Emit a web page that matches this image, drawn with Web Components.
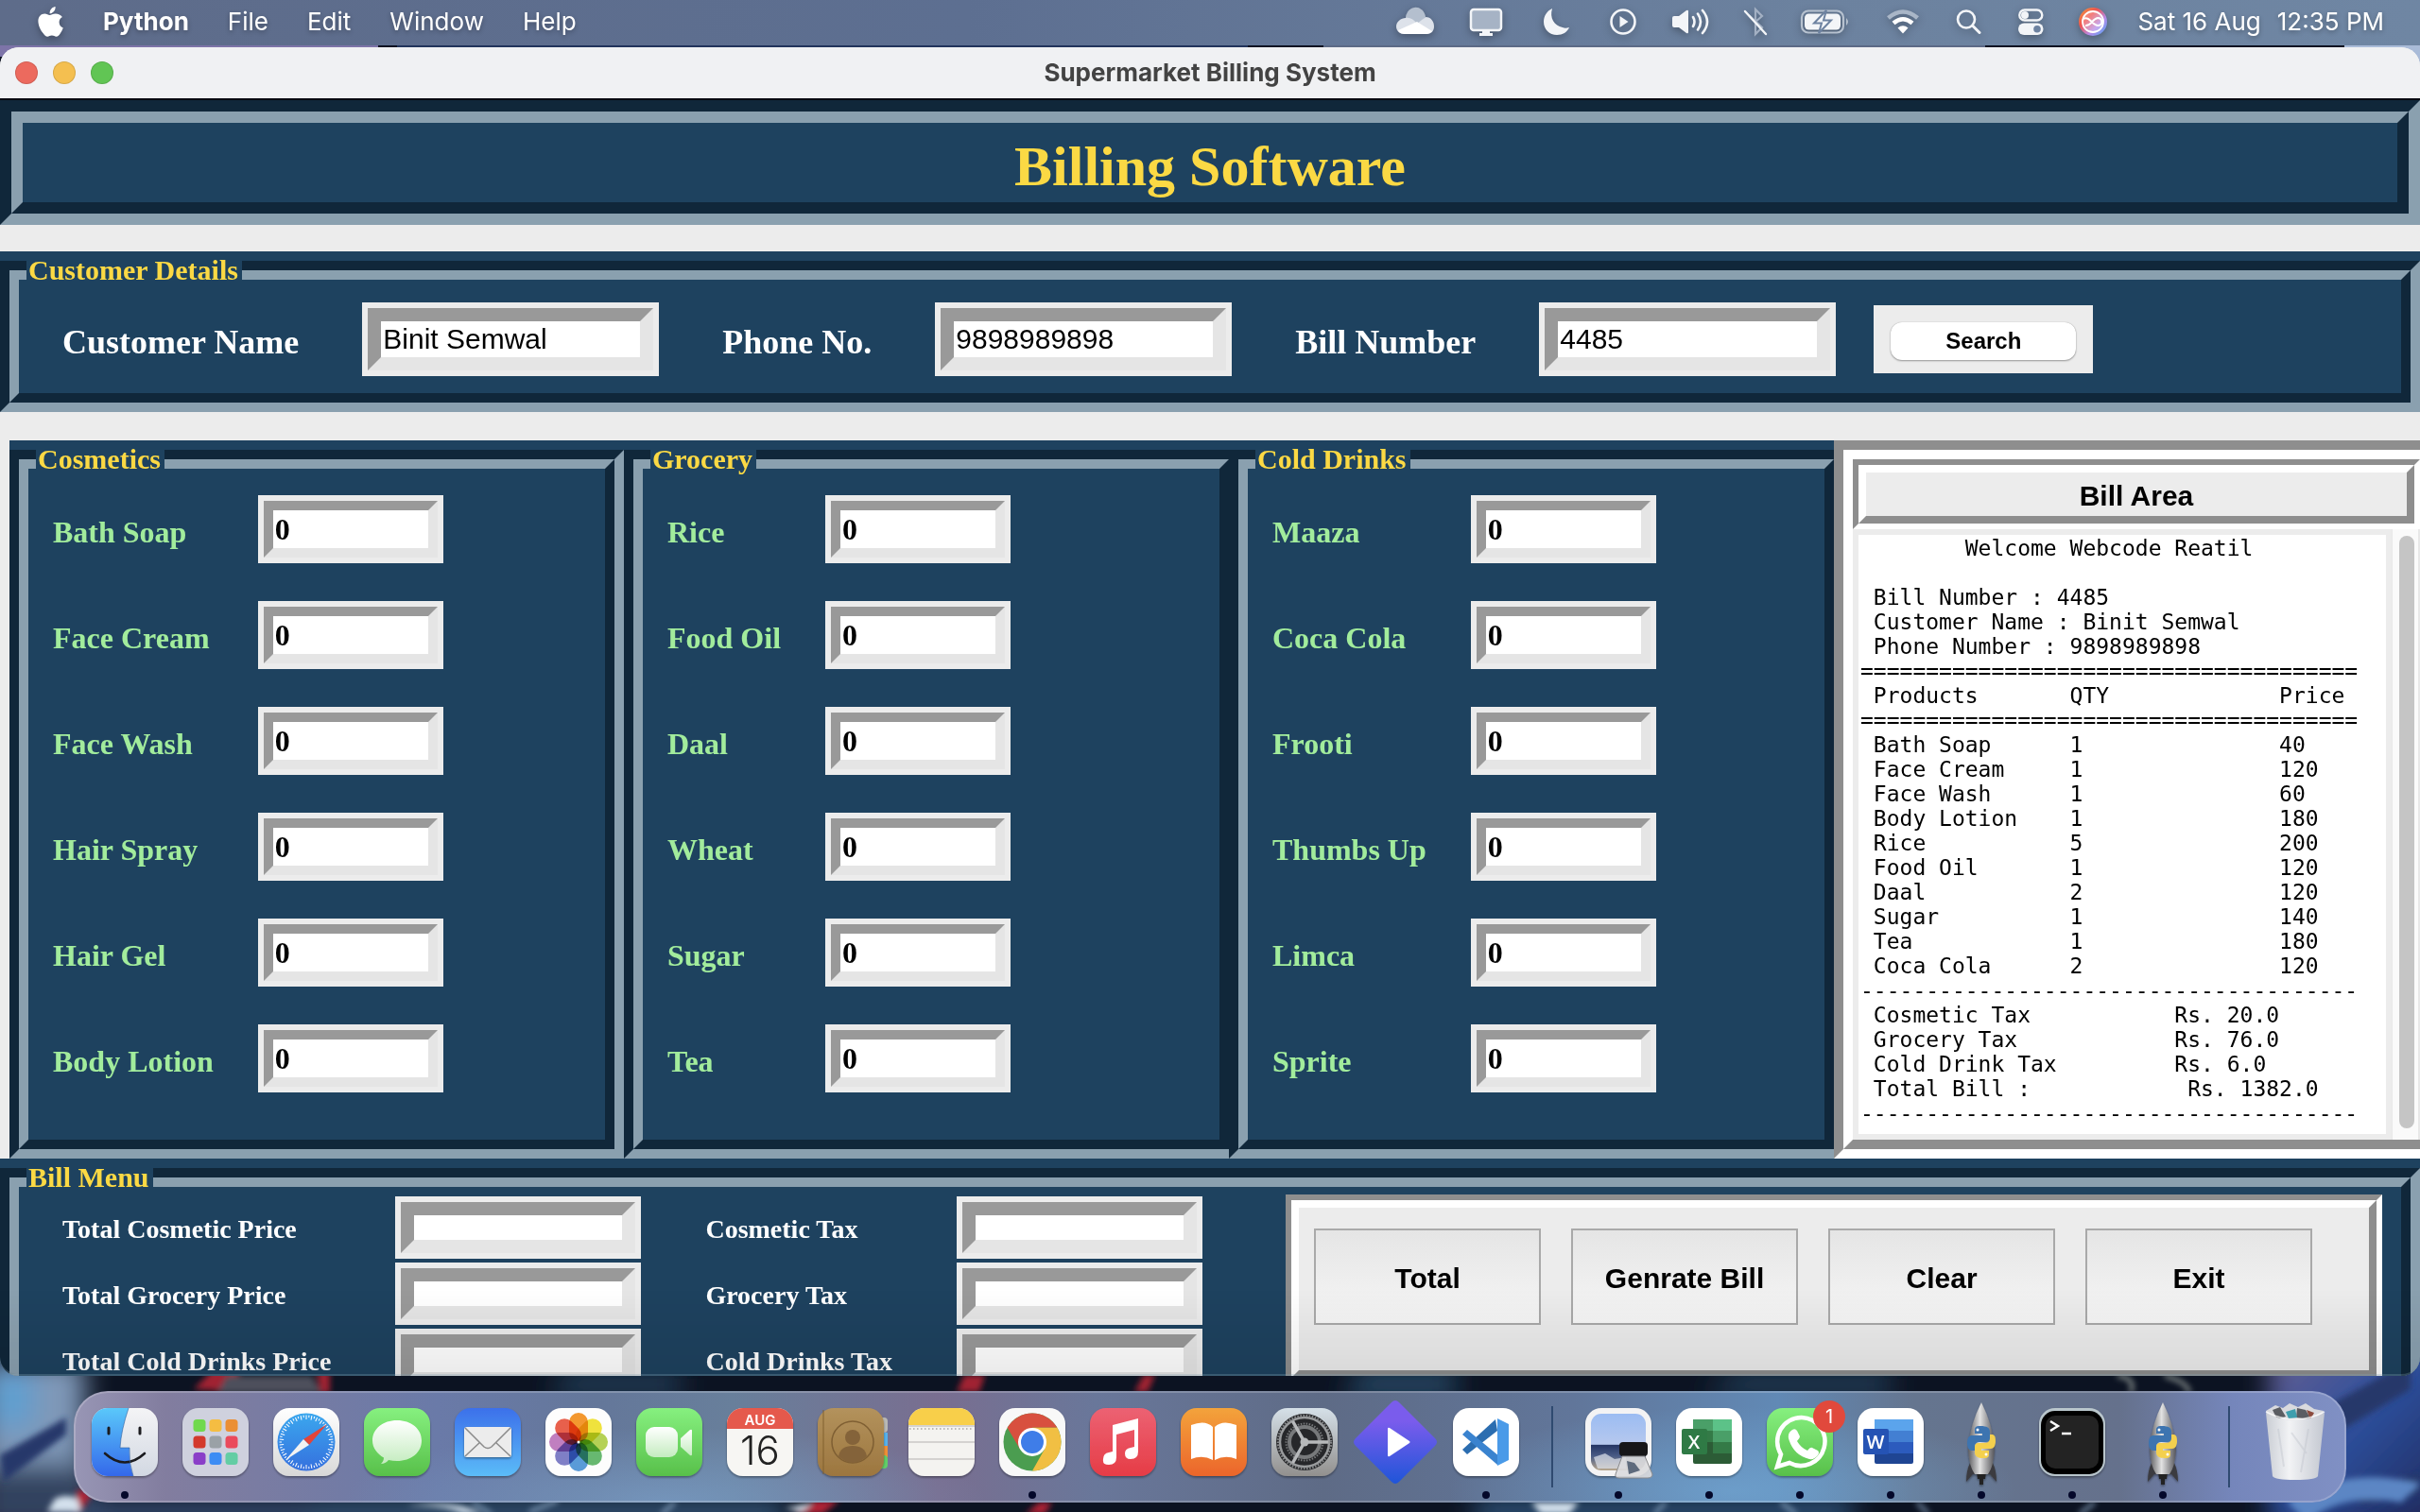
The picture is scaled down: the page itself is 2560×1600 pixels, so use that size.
<!DOCTYPE html>
<html lang="en">
<head>
<meta charset="utf-8">
<title>Supermarket Billing System</title>
<style>
html, body { margin: 0; height: 100%; overflow: hidden; background: #0b1020; }
</style>
</head>
<body>
<mac-desktop>
  <mac-menubar slot="menubar"></mac-menubar>
  <mac-window slot="window" heading="Supermarket Billing System">
    <billing-app></billing-app>
  </mac-window>
  <mac-dock slot="dock"></mac-dock>
</mac-desktop>

<script>
const define = (name, html, setup) => {
  const template = document.createElement('template');
  customElements.define(name, class extends HTMLElement {
    connectedCallback() {
      if (this.shadowRoot) return;
      template.innerHTML = typeof html === 'function' ? html(this) : html;
      this.attachShadow({ mode: 'open' }).append(template.content.cloneNode(true));
      if (setup) setup(this);
    }
  });
};

/* ---------- desktop ---------- */
define('mac-desktop', `
<style>
:host { display: flex; flex-direction: column; height: 100vh; position: relative; overflow: hidden; isolation: isolate; background: #0e1526; }
.wall { position: absolute; inset: 0; width: 100%; height: 100%; z-index: -1; }
.win { flex: 1; min-height: 0; margin-top: 2px; display: flex; }
.dock { display: flex; justify-content: center; padding: 16px 0 10px; }
</style>
<svg class="wall" viewBox="0 0 2560 1600" preserveAspectRatio="none" aria-hidden="true">
  <defs><filter id="b1"><feGaussianBlur stdDeviation="3"/></filter><filter id="b2"><feGaussianBlur stdDeviation="14"/></filter>
  <linearGradient id="wr" x1="0" y1="0" x2="1" y2="1"><stop offset="0" stop-color="#6b6190"/><stop offset=".45" stop-color="#2d4f9c"/><stop offset="1" stop-color="#1c2250"/></linearGradient></defs>
  <rect width="2560" height="1600" fill="#0c1322"/>
  <rect width="400" height="60" fill="#7d74a8"/><rect x="420" width="900" height="60" fill="#22345c"/><rect x="1400" width="700" height="60" fill="#5c6a86"/><rect x="2480" width="80" height="80" fill="#a9bbd8"/>
  <g filter="url(#b2)">
    <rect x="-20" y="1440" width="110" height="130" fill="#7f98b8"/>
    <rect x="-10" y="1450" width="45" height="60" fill="#5e9fd0"/>
    <rect x="-20" y="1550" width="120" height="70" fill="#33425f"/>
    <rect x="2400" y="1420" width="200" height="200" fill="url(#wr)"/>
    <rect x="90" y="1592" width="300" height="20" fill="#46628e"/>
    <rect x="330" y="1592" width="500" height="20" fill="#45719a"/>
    <rect x="1560" y="1590" width="400" height="20" fill="#3b6b99"/>
    <path d="M1440 1450h100v30h-120zM600 1455h120v20h-140zM1840 1455h160v20h-200z" fill="#274a66"/>
  </g>
  <g filter="url(#b1)">
    <path d="M205 1470l20-20h30l-15 22zM335 1452h14v22h-10zM1020 1455h22l-6 18h-24zM1210 1455h12l-8 18h-14z" fill="#a02330"/>
    <path d="M240 1456h90l10 18h-110z" fill="#4d4f5c"/>
    <path d="M76 1600l6-24 16 4-14 22zM840 1602l22-14h26l-18 14zM1085 1602l14-12h14l-8 12z" fill="#b02434"/>
    <path d="M50 1600l8-14q12-6 24 0l4 14zM430 1594q50-8 80 8h-20q-20-10-60-8zM830 1596l30-6-12 10zM1620 1590h50l-10 12h-30z" fill="#d3e0ec"/>
    <path d="M0 1540l70-40v18l-66 50zM2440 1500l110-60v30l-100 60zM2480 1580l80-20v20l-60 12z" fill="#26386a"/>
    <path d="M2420 1590q60-40 140-20l-20 20q-60-12-100 20z" fill="#5b86c4"/>
    <path d="M2240 1456q20 2 14 18M2290 1456q24 6 26 18" fill="none" stroke="#aeb6ae" stroke-width="3"/>
    <path d="M500 1590l20 12M560 1600l30-12M700 1602l14-12M1750 1602l12-12M1900 1602l-16-12M2040 1602l-12-12M2200 1602l16-12" stroke="#93aecb" stroke-width="3"/>
  </g>
</svg>
<slot name="menubar"></slot>
<div class="win"><slot name="window"></slot></div>
<div class="dock"><slot name="dock"></slot></div>`);

/* ---------- menu bar ---------- */
define('mac-menubar', `
<style>
:host { display: flex; align-items: center; justify-content: space-between; height: 48px; box-sizing: border-box; padding: 0 38px 2px 40px;
  background: linear-gradient(90deg, #5e6c8a, #5d6f91 40%, #6c829f 75%, #6f86a3); color: #fff; font: 26px/32px Inter, "Noto Sans", sans-serif; }
nav, .status { display: flex; align-items: center; }
button { all: unset; text-shadow: 0 2px 5px rgba(0,0,0,.3); margin-right: 41px; white-space: nowrap; }
button.logo { display: flex; }
svg { display: block; filter: drop-shadow(0 3px 4px rgba(0,0,0,.3)); overflow: visible; }
.status { gap: 38px; }
.clock { display: flex; gap: 17px; margin-left: -6px; text-shadow: 0 2px 5px rgba(0,0,0,.3); white-space: nowrap; }
button.app { font-weight: 700; }
</style>
<nav>
  <button class="logo" aria-label="Apple menu"><svg width="28" height="32" viewBox="0 0 28 32" fill="#fff"><path d="M18.600 0c.2 2.200-.6 4-1.800 5.300-1.200 1.400-2.800 2.100-4.200 2-.2-2 .7-3.900 1.800-5.100C15.500 1 17.300.1 18.600 0zM25.900 10.900c-2.100 1.300-3.300 3.100-3.300 5.600 0 2.900 1.600 5 4.200 6.100-.7 2-1.700 4-3.100 5.900-1.100 1.600-2.400 3.200-4.200 3.200-1.700 0-2.400-1.100-4.600-1.100-2.300 0-3 1.100-4.700 1.100-1.800 0-3.100-1.700-4.300-3.300C2.600 24.900.3 19.400.4 14.800.6 10.400 3.700 7.600 7.300 7.600c2 0 3.900 1.400 5.300 1.400 1.300 0 3.500-1.500 6.200-1.400 2.900.1 5.500 1.400 7.100 3.300z"/></svg></button>
  <button class="app">Python</button><button>File</button><button>Edit</button><button>Window</button><button>Help</button>
</nav>
<div class="status">
  <svg width="42" height="28" viewBox="0 0 42 28"><path d="M10 12a10 11 0 0 1 21-3l-9 9z" fill="#b4bfce"/><path d="M10 10c4-1 8 1 12 6l9-7c6 0 9 5 9 10 0 5-3 8-8 8H9c-5 0-9-3-9-8 0-5 5-9 10-9z" fill="#dde2ea"/><path d="M2 23L22 14l16 10c-2 2-4 3-6 3H9c-3 0-6-1-7-4z" fill="#fff"/></svg>
  <svg width="38" height="28" viewBox="0 0 38 28"><rect x="-1" y="1" width="32" height="22" rx="3" fill="#a6b3c5" stroke="#f3f5f8" stroke-width="2.500"/><path d="M11 24h8v2h3v3H8v-3h3z" fill="#f3f5f8"/></svg>
  <svg width="32" height="28" viewBox="0 0 32 28"><path d="M9 0C3 3 0 8 0 14c0 8 6 14 14 14 6 0 11-3 13-8-3 1-5 1-7 0C11 18 6 10 9 0z" fill="#f3f5f8"/></svg>
  <svg width="28" height="28" viewBox="0 0 28 28"><circle cx="14" cy="14" r="12.500" fill="none" stroke="#f3f5f8" stroke-width="2.600"/><path d="M10.500 8v12l9-6z" fill="#f3f5f8"/></svg>
  <svg width="40" height="28" viewBox="0 0 40 28"><path d="M0 10q0-2 2-2h5l8-6q2-1 2 1v22q0 2-2 1l-8-6H2q-2 0-2-2z" fill="#f3f5f8"/><path d="M22 9q3 5 0 10M27 5.500q6 8.500 0 17M32 2q10 12 0 24" fill="none" stroke="#f3f5f8" stroke-width="2.600" stroke-linecap="round"/></svg>
  <svg width="20" height="28" viewBox="0 0 20 28"><path d="M3 7l14 13-7 7V1l7 7-8 7" fill="none" stroke="#a3b0c3" stroke-width="2.200"/><path d="M-1 3l22 24" stroke="#f3f5f8" stroke-width="2.400" stroke-linecap="round"/></svg>
  <svg width="52" height="26" viewBox="0 0 52 26"><rect x="1" y="1.500" width="44" height="23" rx="7" fill="none" stroke="#b6c1cf" stroke-width="2.200"/><path d="M48 9q4 4 0 8z" fill="#b6c1cf"/><rect x="4" y="4.500" width="38" height="17" rx="4.500" fill="#f3f5f8"/><path d="M27 1L14 14.500h8L19 25l13-13.500h-8z" fill="#f3f5f8" stroke="#6d82a0" stroke-width="2"/></svg>
  <svg width="36" height="26" viewBox="0 0 36 26"><path d="M2.500 9Q18-4 33.500 9" fill="none" stroke="#a9b6c7" stroke-width="4.500"/><path d="M8 14.500Q18 6 28 14.500" fill="none" stroke="#fff" stroke-width="4.500"/><path d="M18 25.500l-5.500-6Q18 15 23.500 19.500z" fill="#fff"/></svg>
  <svg width="28" height="26" viewBox="0 0 28 26"><circle cx="11" cy="10.500" r="9" fill="none" stroke="#f3f5f8" stroke-width="2.600"/><path d="M17.500 17l7.500 7.500" stroke="#f3f5f8" stroke-width="3" stroke-linecap="round"/></svg>
  <svg width="26" height="28" viewBox="0 0 26 28"><rect x="1.300" y="1.500" width="24" height="11" rx="5.500" fill="none" stroke="#f3f5f8" stroke-width="2.400"/><circle cx="7" cy="7" r="4" fill="#f3f5f8"/><rect x="0" y="15.500" width="26.500" height="12.500" rx="6.200" fill="#f3f5f8"/><circle cx="20" cy="21.700" r="3.800" fill="#6d82a0"/></svg>
  <svg width="30" height="30" viewBox="0 0 30 30"><defs><linearGradient id="si" x1="0" y1="0" x2="1" y2="1"><stop offset="0" stop-color="#f2a33c"/><stop offset=".35" stop-color="#ef5350"/><stop offset=".65" stop-color="#b68be8"/><stop offset="1" stop-color="#4aa8f5"/></linearGradient></defs><circle cx="15" cy="15" r="15" fill="url(#si)"/><circle cx="15" cy="15" r="11" fill="#fff" fill-opacity=".25" stroke="#fff" stroke-width="1.800"/><path d="M5 12c6-4 10 8 16 7 5-1 4-8-1-8-6 1-7 9-13 8" fill="none" stroke="#fff" stroke-width="2"/></svg>
  <div class="clock"><span>Sat 16 Aug</span><span>12:35 PM</span></div>
</div>`);

/* ---------- window frame ---------- */
define('mac-window', el => `
<style>
:host { display: flex; flex-direction: column; flex: 1; min-width: 0; min-height: 0; position: relative; overflow: hidden; border-radius: 20px; background: #ececec; }
header { display: flex; align-items: center; flex: none; height: 56px; box-sizing: border-box; border-bottom: 2px solid #05060f; background: #f0f1f3; padding: 0 16px; }
.lights { display: flex; gap: 16px; flex: 1; }
.lights button { all: unset; width: 24px; height: 24px; border-radius: 50%; box-shadow: inset 0 0 0 1px rgba(0,0,0,.12); }
.lights button:nth-child(1) { background: #ec6a5e; }
.lights button:nth-child(2) { background: #f4bf50; }
.lights button:nth-child(3) { background: #61c554; }
h1 { margin: 0; font: 700 26px/32px Inter, "Noto Sans", sans-serif; color: #434343; }
.end { flex: 1; }
main { flex: 1; min-height: 0; overflow: hidden; }
:host::after { content: ""; position: absolute; inset: auto 0 0 0; height: 90px; pointer-events: none; border-bottom: 2px solid rgba(110,135,150,.35); background: linear-gradient(transparent, rgba(0,0,0,.08)); border-radius: 0 0 20px 20px; }
</style>
<header>
  <div class="lights"><button aria-label="Close"></button><button aria-label="Minimise"></button><button aria-label="Zoom"></button></div>
  <h1>${el.getAttribute('heading')}</h1><div class="end"></div>
</header>
<main><slot></slot></main>`);

/* ---------- groove-edged group with a caption ---------- */
define('tk-group', el => `
<style>
:host { display: flex; flex-direction: column; position: relative; box-sizing: border-box; padding-top: 10px; background: #1e425f; }
.outer, .inner { flex: 1; display: flex; flex-direction: column; border: 10px solid; }
.outer { border-color: #10273a #8aa0af #8aa0af #10273a; }
.inner { border-color: #8aa0af #10273a #10273a #8aa0af; }
h2 { position: absolute; left: 28px; top: 4px; margin: 0; padding: 0 4px 0 2px; background: #1e425f; color: #fbd944; font: 700 30px/32px "Liberation Serif", serif; }
</style>
<div class="outer"><div class="inner"><slot></slot></div></div>
<h2>${el.getAttribute('caption')}</h2>`);

/* ---------- label + entry; takes two cells of the parent's grid or row ---------- */
define('tk-field', el => `
<style>
:host { display: contents; }
label { align-self: center; padding-top: var(--label-drop, 6px); white-space: nowrap; color: var(--label-color, #fff); font: 700 var(--label-size, 36px)/40px "Liberation Serif", serif; }
input { box-sizing: border-box; flex: none; margin: 6px; padding: 0 2px; width: var(--entry-width, 302px); height: var(--entry-height, 66px);
  border: var(--entry-border, 14px) solid; border-color: #999 #e5e5e5 #e5e5e5 #999; border-radius: 0; outline: 0; box-shadow: 0 0 0 6px #ececec;
  background: #fff; color: #000; font: var(--entry-font, 30px "Liberation Sans", sans-serif); }
</style>
<label for="entry">${el.getAttribute('label')}</label>
<input id="entry" type="text" value="${el.getAttribute('value') || ''}">`);

/* ---------- product column ---------- */
define('product-group', el => `
<style>
:host { display: flex; --label-color: #a2ec9c; --label-size: 32px; --entry-width: 184px; --entry-height: 60px; --entry-border: 10px; --entry-font: 700 32px "Liberation Serif", serif; }
tk-group { flex: 1; }
.grid { display: grid; grid-template-columns: auto auto; justify-content: start; gap: 40px 47px; padding: 28px 26px 50px; }
</style>
<tk-group caption="${el.getAttribute('caption')}"><div class="grid">
${el.getAttribute('items').split(',').map(n => `<tk-field label="${n}" value="0"></tk-field>`).join('')}
</div></tk-group>`);

/* ---------- receipt ---------- */
const cols = (...pairs) => pairs.reduce((s, [at, text]) => s.padEnd(at) + text, '');
const receipt = [
  cols([8, 'Welcome Webcode Reatil']), '',
  ' Bill Number : 4485', ' Customer Name : Binit Semwal', ' Phone Number : 9898989898',
  '='.repeat(38), cols([1, 'Products'], [16, 'QTY'], [32, 'Price']), '='.repeat(38),
  ...[['Bath Soap', 1, 40], ['Face Cream', 1, 120], ['Face Wash', 1, 60], ['Body Lotion', 1, 180], ['Rice', 5, 200],
      ['Food Oil', 1, 120], ['Daal', 2, 120], ['Sugar', 1, 140], ['Tea', 1, 180], ['Coca Cola', 2, 120]]
    .map(([n, q, p]) => cols([1, n], [16, q], [32, p])),
  '-'.repeat(38),
  cols([1, 'Cosmetic Tax'], [24, 'Rs. 20.0']), cols([1, 'Grocery Tax'], [24, 'Rs. 76.0']),
  cols([1, 'Cold Drink Tax'], [24, 'Rs. 6.0']), cols([1, 'Total Bill :'], [25, 'Rs. 1382.0']),
  '-'.repeat(38)
].join('\n');

define('bill-area', `
<style>
:host { display: flex; position: relative; }
.outer { flex: 1; min-width: 0; display: flex; border: solid; border-width: 10px 0 10px 10px; border-color: #8e8e8e #fff #fff #8e8e8e; }
.inner { flex: 1; min-width: 0; display: flex; flex-direction: column; border: solid; border-width: 10px 0 10px 10px; border-color: #fff #8e8e8e #8e8e8e #fff; background: #ececec; }
.cap { border: 6px solid; border-color: #8e8e8e #fff #fff #8e8e8e; }
h2 { margin: 0; border: 8px solid; border-color: #fff #8e8e8e #8e8e8e #fff; padding-top: 4px; text-align: center; color: #000; font: 700 30px/42px "Liberation Sans", sans-serif; }
.body { flex: 1; display: flex; min-height: 0; }
textarea { flex: 1; min-width: 0; box-sizing: border-box; margin: 0; border: 6px solid #ececec; outline: 0; padding: 1px 2px; resize: none; overflow: hidden; white-space: pre; background: #fff; color: #000; font: 23px/26px "DejaVu Sans Mono", monospace; }
.scroll { width: 30px; box-sizing: border-box; background: #fafafa; border: solid #e8e8e8; border-width: 0 2px 0 1px; padding: 7px 4px 12px 7px; display: flex; }
.thumb { flex: 1; border-radius: 8px; background: #c5c5c5; }
</style>
<div class="outer"><div class="inner">
  <div class="cap"><h2>Bill Area</h2></div>
  <div class="body"><textarea readonly spellcheck="false" aria-label="Bill"></textarea><div class="scroll"><div class="thumb"></div></div></div>
</div></div>`, el => { el.shadowRoot.querySelector('textarea').value = receipt; });

/* ---------- application ---------- */
define('billing-app', `
<style>
:host { display: block; }
.banner { border: 12px solid; border-color: #10273a #8aa0af #8aa0af #10273a; }
.banner h1 { margin: 0; padding-top: 8px; border: 12px solid; border-color: #8aa0af #10273a #10273a #8aa0af; background: #1e425f; color: #fbd944; text-align: center; font: 700 60px/76px "Liberation Serif", serif; }
.customer { margin: 28px 0 30px; }
.row { display: flex; align-items: center; }
.customer .row { gap: 40px; padding: 24px 46px 18px; }
.fields { display: flex; gap: 0 67px; }
.search { background: #ececec; padding: 18px 18px 14px; display: flex; }
.search button { width: 196px; height: 40px; padding: 0; border: 0; border-radius: 12px; background: #fff; box-shadow: 0 1px 2px rgba(0,0,0,.35), 0 0 1px rgba(0,0,0,.3); font: 700 24px/40px "Liberation Sans", sans-serif; color: #000; }
.shop { display: grid; grid-template-columns: 650fr 640fr 640fr 620fr; padding-left: 10px; }
.shop product-group + product-group { margin-right: -10px; }
.shop > * { position: relative; }
.menu .row { align-items: flex-start; gap: 88px; padding: 8px 20px 12px 46px; }
.totals { display: grid; grid-template-columns: repeat(4, auto); gap: 4px 68px; padding-top: 2px; --label-size: 28px; --label-drop: 4px; --entry-width: 248px; --entry-height: 54px; }
.panel { flex: 1; border: 6px solid; border-color: #8e8e8e #fff #fff #8e8e8e; }
.actions { display: flex; gap: 32px; height: 150px; padding: 22px 16px 0; border: 8px solid; border-color: #fff #8e8e8e #8e8e8e #fff; background: #ececec; }
.actions button { width: 240px; height: 102px; padding: 4px 0 0; border: 2px solid #a9a9a9; background: linear-gradient(#e5e5e5, #f6f6f6); font: 700 30px/36px "Liberation Sans", sans-serif; color: #000; white-space: nowrap; }
</style>
<div class="banner"><h1>Billing Software</h1></div>
<tk-group class="customer" caption="Customer Details">
  <div class="row">
    <div class="fields">
      <tk-field label="Customer Name" value="Binit Semwal"></tk-field>
      <tk-field label="Phone No." value="9898989898"></tk-field>
      <tk-field label="Bill Number" value="4485"></tk-field>
    </div>
    <div class="search"><button type="button">Search</button></div>
  </div>
</tk-group>
<div class="shop">
  <product-group caption="Cosmetics" items="Bath Soap,Face Cream,Face Wash,Hair Spray,Hair Gel,Body Lotion"></product-group>
  <product-group caption="Grocery" items="Rice,Food Oil,Daal,Wheat,Sugar,Tea"></product-group>
  <product-group caption="Cold Drinks" items="Maaza,Coca Cola,Frooti,Thumbs Up,Limca,Sprite"></product-group>
  <bill-area></bill-area>
</div>
<tk-group class="menu" caption="Bill Menu">
  <div class="row">
    <div class="totals">
      <tk-field label="Total Cosmetic Price"></tk-field><tk-field label="Cosmetic Tax"></tk-field>
      <tk-field label="Total Grocery Price"></tk-field><tk-field label="Grocery Tax"></tk-field>
      <tk-field label="Total Cold Drinks Price"></tk-field><tk-field label="Cold Drinks Tax"></tk-field>
    </div>
    <div class="panel"><div class="actions">
      <button type="button">Total</button><button type="button">Genrate Bill</button><button type="button">Clear</button><button type="button">Exit</button>
    </div></div>
  </div>
</tk-group>`);

/* ---------- dock ---------- */
define('dock-item', el => `
<style>
:host { display: block; position: relative; width: 96px; height: 118px; flex: none; }
button { all: unset; display: block; width: 96px; height: 118px; }
.dot { position: absolute; left: 44px; top: 106px; width: 8px; height: 8px; border-radius: 50%; background: #04082a; }
.badge { position: absolute; left: 62px; top: 10px; width: 34px; height: 34px; border-radius: 50%; background: #e1493c; color: #fff; text-align: center; font: 20px/34px Inter, sans-serif; }
</style>
<button aria-label="${el.getAttribute('name')}"><slot></slot></button>
${el.hasAttribute('running') ? '<span class="dot"></span>' : ''}
${el.hasAttribute('badge') ? `<span class="badge">${el.getAttribute('badge')}</span>` : ''}`);

const item = (name, art, attrs = '') => `<dock-item name="${name}" ${attrs}><svg viewBox="0 0 96 118" width="96" height="118">${art}</svg></dock-item>`;
const tile = fill => `<rect x="13" y="18" width="70" height="72" rx="17" fill="${fill}" filter="url(#sh)"/>`;
const ring = (n, f) => Array.from({ length: n }, (_, i) => f(i * 360 / n, i)).join('');
const rocket = `
 <g filter="url(#sh)"><path d="M36 76q-4 8-4 20l7-8h18l7 8q0-12-4-20l-5-8H41z" fill="#3b3b3f"/><path d="M43 86h10l-1 7h-2v6h-4v-6h-2z" fill="#222"/>
 <path d="M48 12q-13 26-14 50 1 18 7 26h14q6-8 7-26-1-24-14-50z" fill="url(#rk)"/></g>
 <path d="M47 37c-6 0-6 2-6 5v3h8v2H38c-3 0-5 3-5 8s2 8 5 8h3v-4c0-3 2-5 5-5h7c3 0 4-2 4-4v-7c0-4-3-6-10-6z" fill="#3d74b0"/><path d="M50 71c6 0 6-2 6-5v-3h-8v-2h10c3 0 5-3 5-8s-1-7-4-7h-2v4c0 3-2 5-5 5h-7c-3 0-4 2-4 4v6c0 4 3 6 9 6z" fill="#f4d04e"/><circle cx="44" cy="41" r="1.500" fill="#fff"/><circle cx="53" cy="67" r="1.500" fill="#fff"/>`;

define('mac-dock', `
<style>
:host { display: flex; height: 118px; box-sizing: border-box; padding: 0 6px; border-radius: 36px; box-shadow: inset 0 0 0 2px rgba(255,255,255,.2);
  background: radial-gradient(ellipse 300px 90px at 73% 90%, rgba(112,165,210,.75), transparent), radial-gradient(ellipse 340px 80px at 26% 100%, rgba(120,155,195,.8), transparent), linear-gradient(90deg, #9896b5, #827d9f 4%, #6a7aa8 16%, #64779a 23%, #687f9b 29%, #796e90 38%, #69779a 45%, #5e6b86 55%, #61769a 66%, #6189b5 75%, #65758f 81%, #65718c 90%, #7586bb 95%, #8090c4); }
.sep { flex: none; width: 2px; margin: 16px 21px; background: #2f4a70; }
svg { display: block; }
.mix { isolation: isolate; }
.mix rect { mix-blend-mode: multiply; }
</style>
<svg width="0" height="0" style="position:absolute" aria-hidden="true"><defs>
 <filter id="sh" x="-20%" y="-20%" width="140%" height="150%"><feDropShadow dx="0" dy="1.500" stdDeviation="1.300" flood-opacity=".4"/></filter>
 <linearGradient id="gb" x2="0" y2="1"><stop offset="0" stop-color="#5ac8fa"/><stop offset="1" stop-color="#3468ea"/></linearGradient>
 <linearGradient id="gw" x2="0" y2="1"><stop offset="0" stop-color="#f4f4f6"/><stop offset="1" stop-color="#d2d8e2"/></linearGradient>
 <linearGradient id="gs" x2="0" y2="1"><stop offset="0" stop-color="#fff"/><stop offset="1" stop-color="#d8d8d8"/></linearGradient>
 <linearGradient id="gsb" x2="0" y2="1"><stop offset="0" stop-color="#3ba7ee"/><stop offset="1" stop-color="#3570de"/></linearGradient>
 <linearGradient id="gg" x2="0" y2="1"><stop offset="0" stop-color="#86f07f"/><stop offset="1" stop-color="#58c04a"/></linearGradient>
 <linearGradient id="gwh" x2="0" y2="1"><stop offset="0" stop-color="#fff"/><stop offset="1" stop-color="#c4ecbf"/></linearGradient>
 <linearGradient id="gm" x2="0" y2="1"><stop offset="0" stop-color="#3c70ea"/><stop offset="1" stop-color="#5bbcf8"/></linearGradient>
 <linearGradient id="gc" x2="0" y2="1"><stop offset="0" stop-color="#b3925c"/><stop offset="1" stop-color="#9c763f"/></linearGradient>
 <linearGradient id="gmu" x2="0" y2="1"><stop offset="0" stop-color="#ec6273"/><stop offset="1" stop-color="#e63c46"/></linearGradient>
 <linearGradient id="gbo" x2="0" y2="1"><stop offset="0" stop-color="#f3a33b"/><stop offset="1" stop-color="#ec652b"/></linearGradient>
 <linearGradient id="gse" x2="0" y2="1"><stop offset="0" stop-color="#d5e0e8"/><stop offset="1" stop-color="#92908e"/></linearGradient>
 <linearGradient id="gd" x2="0" y2="1"><stop offset=".25" stop-color="#7a5cec"/><stop offset="1" stop-color="#1f55d8"/></linearGradient>
 <linearGradient id="gp" x2="0" y2="1"><stop offset="0" stop-color="#9bbcf2"/><stop offset=".54" stop-color="#b6c8ee"/><stop offset=".55" stop-color="#233463"/><stop offset=".75" stop-color="#4a5c86"/><stop offset="1" stop-color="#b9a88e"/></linearGradient>
 <linearGradient id="rk"><stop offset="0" stop-color="#5d5d60"/><stop offset=".45" stop-color="#e2e2e2"/><stop offset="1" stop-color="#55555a"/></linearGradient>
 <linearGradient id="gt"><stop offset="0" stop-color="#c9cdd4"/><stop offset=".4" stop-color="#f2f3f5"/><stop offset="1" stop-color="#c3c7d0"/></linearGradient>
 <clipPath id="ct"><rect x="13" y="18" width="70" height="72" rx="17"/></clipPath>
</defs></svg>
` + [
item('Finder', tile('url(#gw)') + `<g clip-path="url(#ct)"><path d="M52 18Q44 42 43 60h10q-1 16 4 30H13V18z" fill="url(#gb)"/></g><path d="M31 39v6M64 39v6" stroke="#1b1b1f" stroke-width="3" stroke-linecap="round"/><path d="M27 66q21 19 42 0" fill="none" stroke="#1b1b1f" stroke-width="2.600" stroke-linecap="round"/><path d="M52 18Q44 42 43 60h10q-1 16 4 30" fill="none" stroke="#2f5f9c" stroke-width="1" opacity=".6"/>`, 'running'),
item('Launchpad', tile('#cfd1de') + ['#70d94d','#f5bd42','#eb8f33','#d3392c','#9aa1a6','#ea4a5c','#8a3ec8','#3d8cf4','#63cda4'].map((c, i) => `<rect x="${24.500 + (i % 3) * 17}" y="${30 + Math.floor(i / 3) * 17.500}" width="13" height="13" rx="3.500" fill="${c}"/>`).join('')),
item('Safari', tile('url(#gs)') + `<circle cx="48" cy="54" r="30.500" fill="url(#gsb)"/>` + ring(60, (a, i) => `<path d="M48 ${25.500}v${i % 2 ? 2.500 : 4.500}" stroke="#fff" stroke-width="1" transform="rotate(${a} 48 54)"/>`) + `<path d="M70 35L45 51l6 6z" fill="#e2443a"/><path d="M26 73l19-22 6 6z" fill="#f2f2f2"/>`),
item('Messages', tile('url(#gg)') + `<path d="M48 31c15 0 26 9 26 21.500S63 74 48 74c-3 0-6-.4-9-1-2 2.500-5 4-8 4 2-2 3-4 3-6.500-7-4-12-10.500-12-18C22 40 33 31 48 31z" fill="url(#gwh)"/>`),
item('Mail', tile('url(#gm)') + `<rect x="23" y="38" width="50" height="32" rx="3" fill="#ececec" filter="url(#sh)"/><path d="M24 39l20 20q4 3 8 0l20-20M24 69l16-15M72 69L56 54" fill="none" stroke="#8b8b8b" stroke-width="1.500"/>`),
item('Photos', tile('#fdfdfd') + '<g class="mix">' + ['#f3982f','#efe23d','#b5d155','#67b870','#5a9bd8','#7f7fc6','#c07fc0','#e8604c'].map((c, i) => `<rect x="38" y="23" width="20" height="31" rx="10" fill="${c}" transform="rotate(${i * 45} 48 54)"/>`).join('') + `</g><circle cx="48" cy="54" r="1.500" fill="#fff"/>`),
item('FaceTime', tile('url(#gg)') + `<rect x="23" y="38" width="34" height="32" rx="9" fill="url(#gwh)"/><path d="M60 50l10-9q2-1 2 1v25q0 2-2 1l-10-9z" fill="url(#gwh)"/>`),
item('Calendar', tile('#f7f6f3') + `<path clip-path="url(#ct)" d="M13 18h70v22H13z" fill="#e5594c"/><text x="48" y="36" text-anchor="middle" font-family="Inter" font-weight="600" font-size="15" fill="#fff">AUG</text><text x="48" y="78" text-anchor="middle" font-family="Inter" font-weight="300" font-size="42" fill="#222">16</text>`),
item('Contacts', `<rect x="70" y="28" width="17" height="16" rx="4" fill="#b9b9b5"/><rect x="70" y="44" width="17" height="14" fill="#57b1ea"/><rect x="70" y="58" width="17" height="12" fill="#ee9036"/><rect x="70" y="68" width="17" height="14" rx="4" fill="#62cf68"/>` + tile('url(#gc)') + `<circle cx="50" cy="54" r="22" fill="none" stroke="#7f5f33" stroke-width="1.500"/><circle cx="50" cy="49" r="8" fill="#84633a"/><path d="M35 69q2-11 15-11t15 11q-15 14-30 0z" fill="#84633a"/><path d="M19 20v68" stroke="#80602f" stroke-width="1"/>`),
item('Notes', tile('#f4f3f0') + `<path clip-path="url(#ct)" d="M13 18h70v18H13z" fill="#f8cf4a"/><path d="M13 37h70M13 54h70M13 72h70" stroke="#c9c8c5" stroke-width="1.300"/><path d="M14 40h68" stroke="#a9a8a5" stroke-width="1.500" stroke-dasharray="1.500 2.500"/>`),
item('Chrome', tile('#f8f8f8') + `<g transform="translate(48 54)"><circle r="30.500" fill="#4b9d50"/><path d="M-26.400-15.200A30.500 30.500 0 0 1 26.400-15.200H0L-13 7.500z" fill="#d8503f"/><path d="M26.400-15.200A30.500 30.500 0 0 1 0 30.500L13 7.500 0-15.200z" fill="#f1bf43"/><circle r="15" fill="#fff"/><circle r="12" fill="#3f7de8"/></g>`, 'running'),
item('Music', tile('url(#gmu)') + `<path d="M37 36l27-7v35q0 8-8 8-6 0-6-6 0-5 6-6l4-1V41l-19 5v24q0 8-8 8-7 0-6-6 0-6 6-7l4-1z" fill="#fff"/>`),
item('Books', tile('url(#gbo)') + `<path d="M47 38q-8-8-23-2v36q12-5 23 1zM49 38q8-8 23-2v36q-12-5-23 1z" fill="#fff"/>`),
item('System Settings', tile('url(#gse)') + `<g fill="none" transform="translate(48 54)"><circle r="30" fill="#26272a"/><circle r="26" stroke="#9a9c9e" stroke-width="2.500"/><circle r="28" stroke="#86888a" stroke-width="2.500" stroke-dasharray="1.600 1.500"/><circle r="16" stroke="#77797b" stroke-width="4"/><circle r="19.500" stroke="#77797b" stroke-width="2" stroke-dasharray="1.500 1.500"/><path d="M0 0h25M0 0l-12.500 22M0 0l-12.500-22" stroke="#b7b9bb" stroke-width="3.500"/><circle r="4.500" fill="#b7b9bb"/></g>`),
item('Player', `<path d="M44 12q4-4 8 0l38 38q4 4 0 8L52 96q-4 4-8 0L6 58q-4-4 0-8z" fill="url(#gd)"/><path d="M42 39q-2-1-2 1v28q0 2 2 1l21-14q1-1 0-2z" fill="#fff"/>`),
item('Visual Studio Code', tile('#fff') + `<path d="M58 30L23 62l5 5 32-25z" fill="#2b6db0"/><path d="M23 46l5-5 34 28-2 9z" fill="#3a83cf"/><path d="M60 29l12 6v38l-12 6z" fill="#4a9ae8"/>`, 'running'),
'<span class="sep"></span>',
item('Preview', tile('#f3f3f4') + `<rect x="19" y="24" width="58" height="60" rx="11" fill="url(#gp)"/><path d="M22 70l12-4 10 6 12-2v12H26z" fill="#dfe4ec" opacity=".7"/><rect x="49" y="54" width="30" height="15" rx="4" fill="#161618"/><path d="M52 69h24l8 19q0 4-5 4H49q-5 0-4-4z" fill="#dcdcde" fill-opacity=".9" stroke="#8a8a8c"/><path d="M57 74l8 2 6 8-12 4z" fill="#5e6a7c"/>`, 'running'),
item('Excel', tile('#fff') + `<rect x="31" y="30" width="41" height="47" rx="2" fill="#2c5c36"/><path d="M31 30h21v12H31z" fill="#4a9f68"/><path d="M52 30h20v12H52z" fill="#5cc288"/><path d="M31 42h21v12H31z" fill="#347a47"/><path d="M52 42h20v12H52z" fill="#4a9f68"/><path d="M52 54h20v12H52z" fill="#347a47"/><rect x="19" y="40" width="27" height="27" rx="2" fill="#2f7a45"/><text x="32" y="61" text-anchor="middle" font-family="Open Sans" font-weight="600" font-size="20" fill="#fff">X</text>`, 'running'),
item('WhatsApp', tile('url(#gg)') + `<path d="M50 28a25.500 25.500 0 1 1-13 48l-13 4 4-13a25.500 25.500 0 0 1 22-39z" fill="none" stroke="#fff" stroke-width="4.500"/><path d="M40 41q3-2 5 1l3 6q0 2-3 5 4 7 11 10 3-4 5-3l6 3q2 2 0 5-4 5-9 4-17-4-22-22-1-6 4-9z" fill="#fff"/>`, 'running badge="1"'),
item('Word', tile('#fff') + `<rect x="31" y="30" width="41" height="47" rx="2" fill="#1f4593"/><path d="M31 30h41v12H31z" fill="#5ba4ec"/><path d="M31 42h41v12H31z" fill="#437fd2"/><path d="M31 54h41v12H31z" fill="#2c5bbd"/><rect x="19" y="40" width="27" height="27" rx="2" fill="#2553b4"/><text x="32" y="61" text-anchor="middle" font-family="Open Sans" font-weight="600" font-size="20" fill="#fff">W</text>`, 'running'),
item('Python Launcher', rocket, 'running'),
item('Terminal', tile('#b9c6cc') + `<rect x="15" y="21" width="66" height="67" rx="15" fill="#000"/><rect x="20" y="26" width="56" height="56" rx="10" fill="#232323"/><path d="M25 32l8 5-8 5M37 45h10" fill="none" stroke="#fff" stroke-width="2.500"/>`, 'running'),
item('IDLE', rocket, 'running'),
'<span class="sep"></span>',
item('Trash', `<path d="M17 21l10-6 8 3 7-5 9 4 8-4 9 6 10 2-3 10H21z" fill="#d9dade"/><path d="M24 20l8-3 6 10-9 3zM50 18l9 2 6 10-16-2z" fill="#5b5d62"/><path d="M38 22l10-3 2 9-9 1z" fill="#3f9fae"/><path d="M60 20l8 3-4 7z" fill="#8c4b3d"/><path d="M17 23q31 16 62 0l-7 67q-2 4-24 4t-24-4z" fill="url(#gt)"/><path d="M17 22q31 16 62 0" fill="none" stroke="#fff" stroke-opacity=".75" stroke-width="1.500"/><path d="M30 40l6 40M62 40l-8 46M44 44l16 22" stroke="#b9bdc6" stroke-width="2" opacity=".35"/>`)
].join(''));
</script>
</body>
</html>
